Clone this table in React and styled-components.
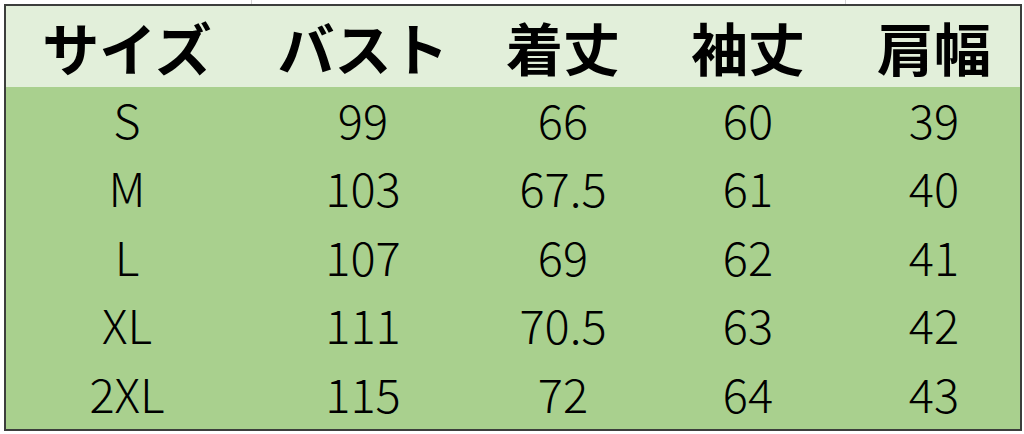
import React from "react";
import styled, { createGlobalStyle } from "styled-components";

const Global = createGlobalStyle`
  html, body { margin: 0; padding: 0; background: #ffffff; }
  body { font-family: "Noto Sans CJK JP", "Noto Sans", sans-serif; }
`;

const COLS = "242px 230px 170px 200px 172px";

const Page = styled.div`
  width: 1024px;
  height: 434px;
  overflow: hidden;
  display: flex;
  flex-direction: column;
  background: #ffffff;
`;

const Strip = styled.div`
  height: ${(p) => p.$h}px;
  display: grid;
  grid-template-columns: 252px 594px 1fr;
`;

const GridCell = styled.div`
  border-right: 1px solid #d4d4d4;
`;

const Table = styled.div`
  margin-left: 4px;
  width: 1014px;
  border: 2px solid #3c3e3c;
  display: flex;
  flex-direction: column;
`;

const Row = styled.div`
  display: grid;
  grid-template-columns: ${COLS};
  height: ${(p) => p.$h}px;
  background: ${(p) => p.$bg};
  align-items: center;
`;

const HeadCell = styled.div`
  text-align: center;
  font-size: 57px;
  font-weight: 700;
  color: #000;
  line-height: 1;
  padding-top: 0;
`;

const Cell = styled.div`
  text-align: center;
  font-size: 47px;
  font-weight: 300;
  color: #000;
  line-height: 1;
  padding-bottom: 6px;
`;

const headers = ["サイズ", "バスト", "着丈", "袖丈", "肩幅"];
const rows = [
  ["S", "99", "66", "60", "39"],
  ["M", "103", "67.5", "61", "40"],
  ["L", "107", "69", "62", "41"],
  ["XL", "111", "70.5", "63", "42"],
  ["2XL", "115", "72", "64", "43"],
];

export default function App() {
  const heights = [68, 69, 68, 69, 68];
  return (
    <Page>
      <Global />
      <Strip $h={4}>
        <GridCell />
        <GridCell />
        <div />
      </Strip>
      <Table>
        <Row $h={81} $bg="#e2efda">
          {headers.map((h) => (
            <HeadCell key={h}>{h}</HeadCell>
          ))}
        </Row>
        {rows.map((r, i) => (
          <Row key={r[0]} $h={heights[i]} $bg="#a9d08e">
            {r.map((c, j) => (
              <Cell key={j}>{c}</Cell>
            ))}
          </Row>
        ))}
      </Table>
    </Page>
  );
}
